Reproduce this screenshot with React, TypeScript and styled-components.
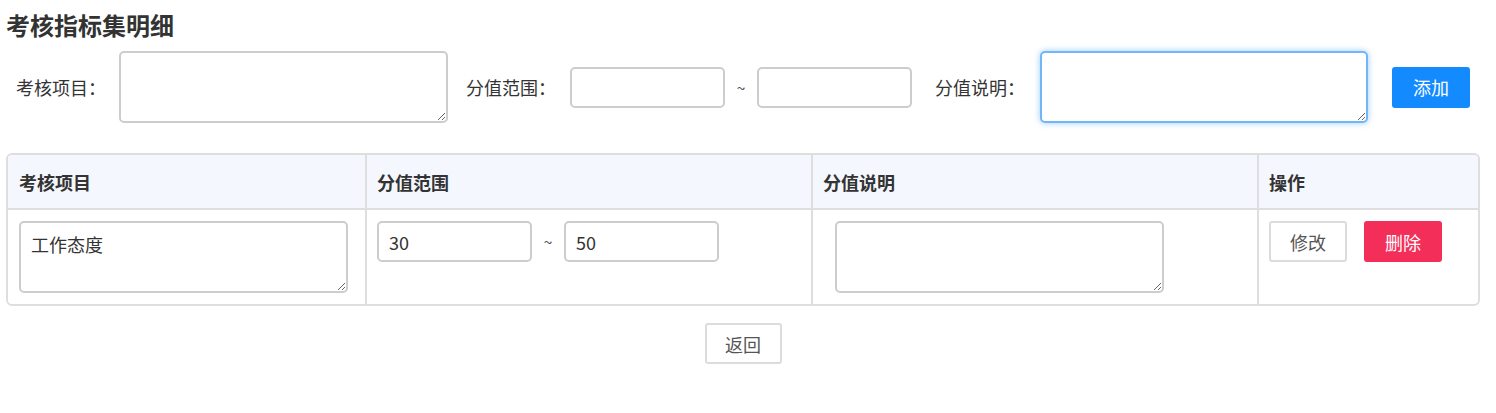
import React from "react";
import styled, { createGlobalStyle } from "styled-components";

const Global = createGlobalStyle`
  html, body { margin: 0; padding: 0; background: #fff; }
  body {
    font-family: "Noto Sans CJK SC", "Noto Sans", sans-serif;
    color: #333;
    font-size: 18px;
  }
  * { box-sizing: border-box; }
`;

const Page = styled.div`
  padding: 0 16px 0 6px;
  width: 1496px;
`;

const Title = styled.h3`
  margin: 0;
  padding-top: 9px;
  font-size: 24px;
  line-height: 31px;
  font-weight: 700;
  color: #333;
`;

const FormRow = styled.div`
  display: flex;
  align-items: center;
  margin-top: 11px;
  padding-left: 10px;
  height: 72px;
`;

const Label = styled.label<{ $gap?: number; $w?: number }>`
  width: ${(p) => p.$w ?? 104}px;
  flex: none;
  margin-left: ${(p) => p.$gap ?? 0}px;
  font-size: 18px;
  color: #333;
  white-space: nowrap;
`;

const TextArea = styled.textarea<{ $w: number; $focus?: boolean }>`
  width: ${(p) => p.$w}px;
  height: 72px;
  flex: none;
  border: 2px solid ${(p) => (p.$focus ? "#74b6f5" : "#cdcdcd")};
  border-radius: 5px;
  padding: 8px 10px;
  font-family: inherit;
  font-size: 18px;
  color: #333;
  outline: none;
  resize: both;
  box-shadow: ${(p) => (p.$focus ? "0 0 6px rgba(24,144,255,0.45)" : "none")};
`;

const Input = styled.input`
  width: 155px;
  height: 41px;
  flex: none;
  border: 2px solid #cdcdcd;
  border-radius: 5px;
  padding: 0 10px;
  font-family: inherit;
  font-size: 18px;
  color: #333;
  outline: none;
`;

const Tilde = styled.span`
  width: 32px;
  flex: none;
  text-align: center;
  font-size: 16px;
  line-height: 41px;
  color: #555;
`;

const Button = styled.button<{ $variant?: "primary" | "danger" | "default"; $gap?: number }>`
  width: 78px;
  height: 41px;
  flex: none;
  margin-left: ${(p) => p.$gap ?? 0}px;
  border-radius: 3px;
  font-family: inherit;
  font-size: 18px;
  cursor: pointer;
  border: 2px solid
    ${(p) =>
      p.$variant === "primary" ? "#138bff" : p.$variant === "danger" ? "#f32e59" : "#dcdcdc"};
  background: ${(p) =>
    p.$variant === "primary" ? "#138bff" : p.$variant === "danger" ? "#f32e59" : "#fff"};
  color: ${(p) => (p.$variant === "primary" || p.$variant === "danger" ? "#fff" : "#555")};
`;

const Table = styled.div`
  margin-top: 30px;
  width: 1474px;
  border: 2px solid #dedede;
  border-radius: 6px;
  overflow: hidden;
  display: grid;
  grid-template-columns: 359px 446px 446px 1fr;
`;

const HeadCell = styled.div<{ $last?: boolean; $pl?: number }>`
  height: 55px;
  background: #f4f8fe;
  border-bottom: 2px solid #dedede;
  border-right: ${(p) => (p.$last ? "none" : "2px solid #dedede")};
  display: flex;
  align-items: center;
  padding-left: ${(p) => p.$pl ?? 10}px;
  font-weight: 700;
  font-size: 18px;
  color: #333;
`;

const Cell = styled.div<{ $last?: boolean; $pl?: number }>`
  height: 94px;
  border-right: ${(p) => (p.$last ? "none" : "2px solid #dedede")};
  padding: 11px 0 0 ${(p) => p.$pl ?? 10}px;
  display: flex;
  align-items: flex-start;
`;

const Footer = styled.div`
  width: 1474px;
  display: flex;
  justify-content: center;
  margin-top: 17px;
`;

const ReturnButton = styled(Button)`
  width: 77px;
`;

export default function App() {
  return (
    <Page>
      <Global />
      <Title>考核指标集明细</Title>
      <FormRow>
        <Label $w={103}>考核项目：</Label>
        <TextArea $w={329} />
        <Label $gap={18}>分值范围：</Label>
        <Input />
        <Tilde>~</Tilde>
        <Input />
        <Label $gap={23} $w={105}>
          分值说明：
        </Label>
        <TextArea $w={328} $focus />
        <Button $variant="primary" $gap={24}>
          添加
        </Button>
      </FormRow>
      <Table>
        <HeadCell $pl={11}>考核项目</HeadCell>
        <HeadCell>分值范围</HeadCell>
        <HeadCell>分值说明</HeadCell>
        <HeadCell $last>操作</HeadCell>
        <Cell $pl={11}>
          <TextArea $w={329} defaultValue="工作态度" />
        </Cell>
        <Cell>
          <Input defaultValue="30" />
          <Tilde>~</Tilde>
          <Input defaultValue="50" />
        </Cell>
        <Cell $pl={22}>
          <TextArea $w={329} />
        </Cell>
        <Cell $last>
          <Button>修改</Button>
          <Button $variant="danger" $gap={17}>
            删除
          </Button>
        </Cell>
      </Table>
      <Footer>
        <ReturnButton>返回</ReturnButton>
      </Footer>
    </Page>
  );
}
